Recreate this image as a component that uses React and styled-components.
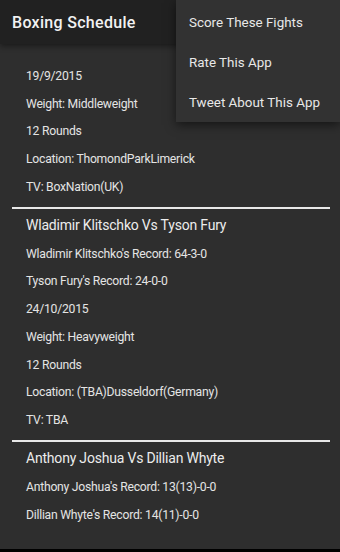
import React from 'react';
import styled, { createGlobalStyle } from 'styled-components';

const GlobalStyle = createGlobalStyle`
  html, body {
    margin: 0;
    padding: 0;
    background: #000;
  }
  body {
    font-family: Roboto, "Noto Sans", "Liberation Sans", sans-serif;
    -webkit-font-smoothing: antialiased;
  }
`;

const Screen = styled.div`
  position: relative;
  width: 340px;
  height: 552px;
  display: flex;
  flex-direction: column;
  overflow: hidden;
  background: #000;
`;

const AppBar = styled.header`
  height: 44px;
  flex-shrink: 0;
  display: flex;
  align-items: center;
  padding: 0 12px;
  background: #212121;
  box-shadow: 0 2px 6px rgba(0, 0, 0, 0.45);
  position: relative;
  z-index: 1;
`;

const Title = styled.h1`
  margin: 0;
  font-size: 16px;
  font-weight: 500;
  color: #f2f2f2;
  letter-spacing: 0.3px;
`;

const Content = styled.main`
  height: 505px;
  flex-shrink: 0;
  background: #2e2e2e;
  padding: 18px 10px 0 12px;
  box-sizing: border-box;
  overflow: hidden;
`;

const NavStrip = styled.div`
  flex: 1;
  background: #000;
`;

const Fight = styled.section`
  display: flex;
  flex-direction: column;
`;

const Divider = styled.hr`
  margin: 6px 0 0;
  border: none;
  height: 2px;
  background: #e8e8e8;
  width: 318px;
`;

const FightTitle = styled.h2`
  margin: 0;
  padding: 1px 0 0 14px;
  height: 30px;
  display: flex;
  align-items: center;
  font-size: 14px;
  font-weight: 400;
  letter-spacing: -0.2px;
  color: #ececec;
`;

const Row = styled.div`
  height: 27.75px;
  padding-left: 14px;
  display: flex;
  align-items: center;
  font-size: 12.2px;
  letter-spacing: -0.25px;
  color: #e4e4e4;
`;

const Menu = styled.ul`
  position: absolute;
  top: 0;
  right: 0;
  width: 164px;
  margin: 0;
  padding: 2px 0 0;
  list-style: none;
  background: #323232;
  box-shadow: 0 3px 10px rgba(0, 0, 0, 0.55);
  z-index: 2;
`;

const MenuItem = styled.li`
  height: 40px;
  display: flex;
  align-items: center;
  padding-left: 13px;
  font-size: 13.4px;
  color: #e8e8e8;
`;

const fights = [
  {
    title: null,
    rows: [
      '19/9/2015',
      'Weight: Middleweight',
      '12 Rounds',
      'Location: ThomondParkLimerick',
      'TV: BoxNation(UK)',
    ],
  },
  {
    title: 'Wladimir Klitschko Vs Tyson Fury',
    rows: [
      "Wladimir Klitschko's Record: 64-3-0",
      "Tyson Fury's Record: 24-0-0",
      '24/10/2015',
      'Weight: Heavyweight',
      '12 Rounds',
      'Location: (TBA)Dusseldorf(Germany)',
      'TV: TBA',
    ],
  },
  {
    title: 'Anthony Joshua Vs Dillian Whyte',
    rows: [
      "Anthony Joshua's Record: 13(13)-0-0",
      "Dillian Whyte's Record: 14(11)-0-0",
    ],
  },
];

const menuItems = ['Score These Fights', 'Rate This App', 'Tweet About This App'];

export default function App() {
  return (
    <Screen>
      <GlobalStyle />
      <AppBar>
        <Title>Boxing Schedule</Title>
      </AppBar>
      <Content>
        {fights.map((f, i) => (
          <Fight key={i}>
            {i > 0 && <Divider />}
            {f.title && <FightTitle>{f.title}</FightTitle>}
            {f.rows.map((r) => (
              <Row key={r}>{r}</Row>
            ))}
          </Fight>
        ))}
      </Content>
      <NavStrip />
      <Menu>
        {menuItems.map((m) => (
          <MenuItem key={m}>{m}</MenuItem>
        ))}
      </Menu>
    </Screen>
  );
}
